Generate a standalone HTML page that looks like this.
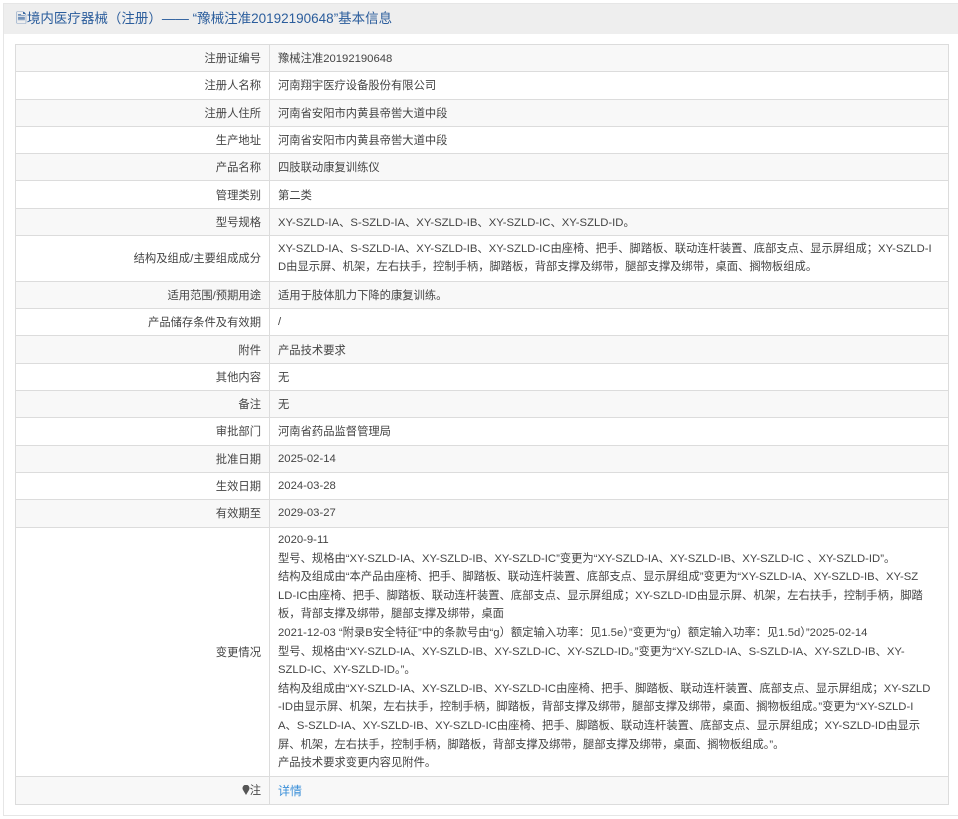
<!DOCTYPE html>
<html><head><meta charset="utf-8"><style>
body{margin:0;background:#fff;font-family:"Liberation Sans","Noto Sans CJK SC",sans-serif;font-size:11.3px;color:#444;}
.wrap{position:absolute;left:3px;top:3px;width:955px;height:813px;border:1px solid #e6e6e6;border-right:none;box-sizing:border-box;}
.hd{height:30px;background:#eeeeee;color:#2b5d9c;font-size:13.5px;line-height:30px;padding-left:12px;}
table{position:absolute;left:11px;top:40px;width:934px;border-collapse:collapse;border:1px solid #d4d4d4;}
td{border:1px solid #dcdcdc;padding:0 8px;vertical-align:middle;white-space:nowrap;}
tr{height:27.3px;}
td.l{width:237px;text-align:right;padding-right:8px;}
tr:nth-child(odd) td{background:#f8f8f8;}
td div{height:18.6px;line-height:18.6px;overflow:visible;}
td.m{padding:3.5px 8px;}
a{color:#3a8fd8;text-decoration:none;font-size:12px;}
</style></head><body>
<div class="wrap"><div class="hd">&#128462;境内医疗器械（注册）—— “豫械注准20192190648”基本信息</div>
<table>
<tr><td class="l">注册证编号</td><td>豫械注准20192190648</td></tr>
<tr><td class="l">注册人名称</td><td>河南翔宇医疗设备股份有限公司</td></tr>
<tr><td class="l">注册人住所</td><td>河南省安阳市内黄县帝喾大道中段</td></tr>
<tr><td class="l">生产地址</td><td>河南省安阳市内黄县帝喾大道中段</td></tr>
<tr><td class="l">产品名称</td><td>四肢联动康复训练仪</td></tr>
<tr><td class="l">管理类别</td><td>第二类</td></tr>
<tr><td class="l">型号规格</td><td>XY-SZLD-IA、S-SZLD-IA、XY-SZLD-IB、XY-SZLD-IC、XY-SZLD-ID。</td></tr>
<tr><td class="l">结构及组成/主要组成成分</td><td class="m" style="padding:3.8px 8px"><div>XY-SZLD-IA、S-SZLD-IA、XY-SZLD-IB、XY-SZLD-IC由座椅、把手、脚踏板、联动连杆装置、底部支点、显示屏组成；XY-SZLD-I</div><div>D由显示屏、机架，左右扶手，控制手柄，脚踏板，背部支撑及绑带，腿部支撑及绑带，桌面、搁物板组成。</div></td></tr>
<tr><td class="l">适用范围/预期用途</td><td>适用于肢体肌力下降的康复训练。</td></tr>
<tr><td class="l">产品储存条件及有效期</td><td>/</td></tr>
<tr><td class="l">附件</td><td>产品技术要求</td></tr>
<tr><td class="l">其他内容</td><td>无</td></tr>
<tr><td class="l">备注</td><td>无</td></tr>
<tr><td class="l">审批部门</td><td>河南省药品监督管理局</td></tr>
<tr><td class="l">批准日期</td><td>2025-02-14</td></tr>
<tr><td class="l">生效日期</td><td>2024-03-28</td></tr>
<tr><td class="l">有效期至</td><td>2029-03-27</td></tr>
<tr><td class="l">变更情况</td><td class="m"><div>2020-9-11</div><div>型号、规格由“XY-SZLD-IA、XY-SZLD-IB、XY-SZLD-IC”变更为“XY-SZLD-IA、XY-SZLD-IB、XY-SZLD-IC 、XY-SZLD-ID”。</div><div>结构及组成由“本产品由座椅、把手、脚踏板、联动连杆装置、底部支点、显示屏组成”变更为“XY-SZLD-IA、XY-SZLD-IB、XY-SZ</div><div>LD-IC由座椅、把手、脚踏板、联动连杆装置、底部支点、显示屏组成；XY-SZLD-ID由显示屏、机架，左右扶手，控制手柄，脚踏</div><div>板，背部支撑及绑带，腿部支撑及绑带，桌面</div><div>2021-12-03 “附录B安全特征”中的条款号由“g）额定输入功率：见1.5e）”变更为“g）额定输入功率：见1.5d）”2025-02-14</div><div>型号、规格由“XY-SZLD-IA、XY-SZLD-IB、XY-SZLD-IC、XY-SZLD-ID。”变更为“XY-SZLD-IA、S-SZLD-IA、XY-SZLD-IB、XY-</div><div>SZLD-IC、XY-SZLD-ID。”。</div><div>结构及组成由“XY-SZLD-IA、XY-SZLD-IB、XY-SZLD-IC由座椅、把手、脚踏板、联动连杆装置、底部支点、显示屏组成；XY-SZLD</div><div>-ID由显示屏、机架，左右扶手，控制手柄，脚踏板，背部支撑及绑带，腿部支撑及绑带，桌面、搁物板组成。”变更为“XY-SZLD-I</div><div>A、S-SZLD-IA、XY-SZLD-IB、XY-SZLD-IC由座椅、把手、脚踏板、联动连杆装置、底部支点、显示屏组成；XY-SZLD-ID由显示</div><div>屏、机架，左右扶手，控制手柄，脚踏板，背部支撑及绑带，腿部支撑及绑带，桌面、搁物板组成。”。</div><div>产品技术要求变更内容见附件。</div></td></tr>
<tr><td class="l"><svg width="8" height="10" viewBox="0 0 8 10" style="vertical-align:-1px"><path d="M4 10 L1 5 A3.5 3.5 0 1 1 7 5 Z" fill="#555"/></svg>注</td><td><a>详情</a></td></tr>
</table></div>
</body></html>
